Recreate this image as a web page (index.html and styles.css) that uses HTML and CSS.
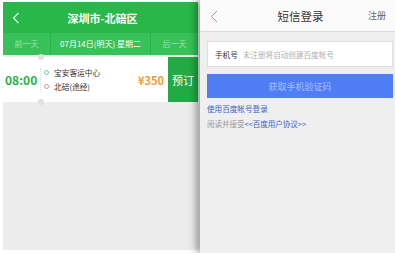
FILE: index.html
```html
<!DOCTYPE html>
<html lang="zh">
<head>
<meta charset="utf-8">
<link rel="stylesheet" href="styles.css">
</head>
<body>
<div class="stage">
  <section class="left">
    <header class="lhead">
      <svg class="back" width="8" height="12" viewBox="0 0 8 12"><path d="M6.5 1 L1.5 6 L6.5 11" fill="none" stroke="#d8f5de" stroke-width="1.2"/></svg>
      <div class="ltitle">深圳市-北碚区</div>
    </header>
    <nav class="days">
      <div class="day dim">前一天</div>
      <div class="day cur">07月14日(明天) 星期二</div>
      <div class="day dim">后一天</div>
    </nav>
    <div class="ticket">
      <div class="time">08:00</div>
      <div class="route">
        <div class="stop"><span class="dot go"></span>宝安客运中心</div>
        <div class="stop"><span class="dot to"></span>北碚(途经)</div>
      </div>
      <div class="price">¥350</div>
      <div class="book">预订</div>
    </div>
  </section>
  <section class="right">
    <header class="rhead">
      <svg class="rback" width="8" height="13" viewBox="0 0 8 13"><path d="M7 1 L1.5 6.5 L7 12" fill="none" stroke="#9a9a9a" stroke-width="1"/></svg>
      <div class="rtitle">短信登录</div>
      <div class="reg">注册</div>
    </header>
    <div class="form">
      <div class="field"><span class="label">手机号</span><span class="ph">未注册将自动创建百度帐号</span></div>
      <div class="btn">获取手机验证码</div>
      <div class="alt">使用百度帐号登录</div>
      <div class="agree">阅读并接受<span class="link">&lt;&lt;百度用户协议&gt;&gt;</span></div>
    </div>
  </section>
</div>
</body>
</html>
```
FILE: styles.css
```css
* { box-sizing: border-box; }
html, body { margin: 0; padding: 0; background: #fff; }
body { font-family: "Noto Sans CJK SC", "Noto Sans", sans-serif; width: 395px; height: 253px; overflow: hidden; }
.stage { display: flex; height: 253px; }
.left { width: 195px; margin: 2px 2px 3px 3px; background: #ececec; display: flex; flex-direction: column; }
.lhead { height: 31px; background: #29b74a; display: flex; align-items: center; position: relative; }
.back { position: absolute; left: 9px; top: 10px; }
.ltitle { flex: 1; text-align: center; color: #fff; font-size: 11px; font-weight: bold; padding-left: 4px; }
.days { height: 22px; background: #37c158; display: flex; align-items: center; }
.day { font-size: 8px; text-align: center; line-height: 22px; }
.day.dim { width: 47px; color: #9fe3ad; }
.day.cur { flex: 1; color: #fff; border-left: 1px solid #2fae4e; border-right: 1px solid #2fae4e; }
.ticket { margin-top: 2px; height: 45px; background: #fff; display: flex; align-items: center; position: relative; }
.ticket::before, .ticket::after { content: ""; position: absolute; left: 35px; width: 6px; height: 6px; border-radius: 50%; background: #e0e0e0; }
.ticket::before { top: -3px; }
.ticket::after { bottom: -3px; }
.time { width: 35px; padding-left: 2px; color: #27b046; font-weight: bold; font-size: 12px; }
.route { flex: 1; border-left: 1px dotted #ddd; padding-left: 3px; display: flex; flex-direction: column; gap: 4px; margin-left: 2px; }
.stop { font-size: 7.7px; color: #333; display: flex; align-items: center; gap: 5px; line-height: 10px; }
.dot { width: 5px; height: 5px; border-radius: 50%; border: 1px solid #6fcf86; display: inline-block; }
.dot.to { border-color: #f08a8a; }
.price { color: #f29a2e; font-weight: bold; font-size: 11px; width: 30px; }
.book { width: 30px; height: 45px; background: #22ab45; color: #fff; font-size: 11px; display: flex; align-items: center; justify-content: center; }
.right { width: 195px; background: #efefef; box-shadow: -3px 0 8px rgba(0,0,0,0.45); position: relative; }
.rhead { height: 32px; background: #fbfbfb; border-bottom: 1px solid #dcdcdc; display: flex; align-items: center; position: relative; }
.rback { position: absolute; left: 10px; top: 10px; }
.rtitle { flex: 1; text-align: center; font-size: 11.5px; color: #333; padding-left: 6px; }
.reg { position: absolute; right: 9px; top: 9px; font-size: 9px; color: #666; }
.form { padding: 9px 2px 0 7px; }
.field { height: 26px; background: #fff; border: 1px solid #dedede; display: flex; align-items: center; padding-left: 7px; font-size: 7.6px; }
.label { color: #333; margin-right: 5px; }
.ph { color: #b0b0b0; }
.btn { margin-top: 7px; height: 24px; background: #4f7df6; color: #a8c0fb; font-size: 9px; display: flex; align-items: center; justify-content: center; }
.alt { margin-top: 5px; font-size: 7.6px; color: #3d63c6; line-height: 12px; }
.agree { margin-top: 3px; font-size: 7.5px; color: #999; line-height: 12px; }
.link { color: #3d63c6; }
```
